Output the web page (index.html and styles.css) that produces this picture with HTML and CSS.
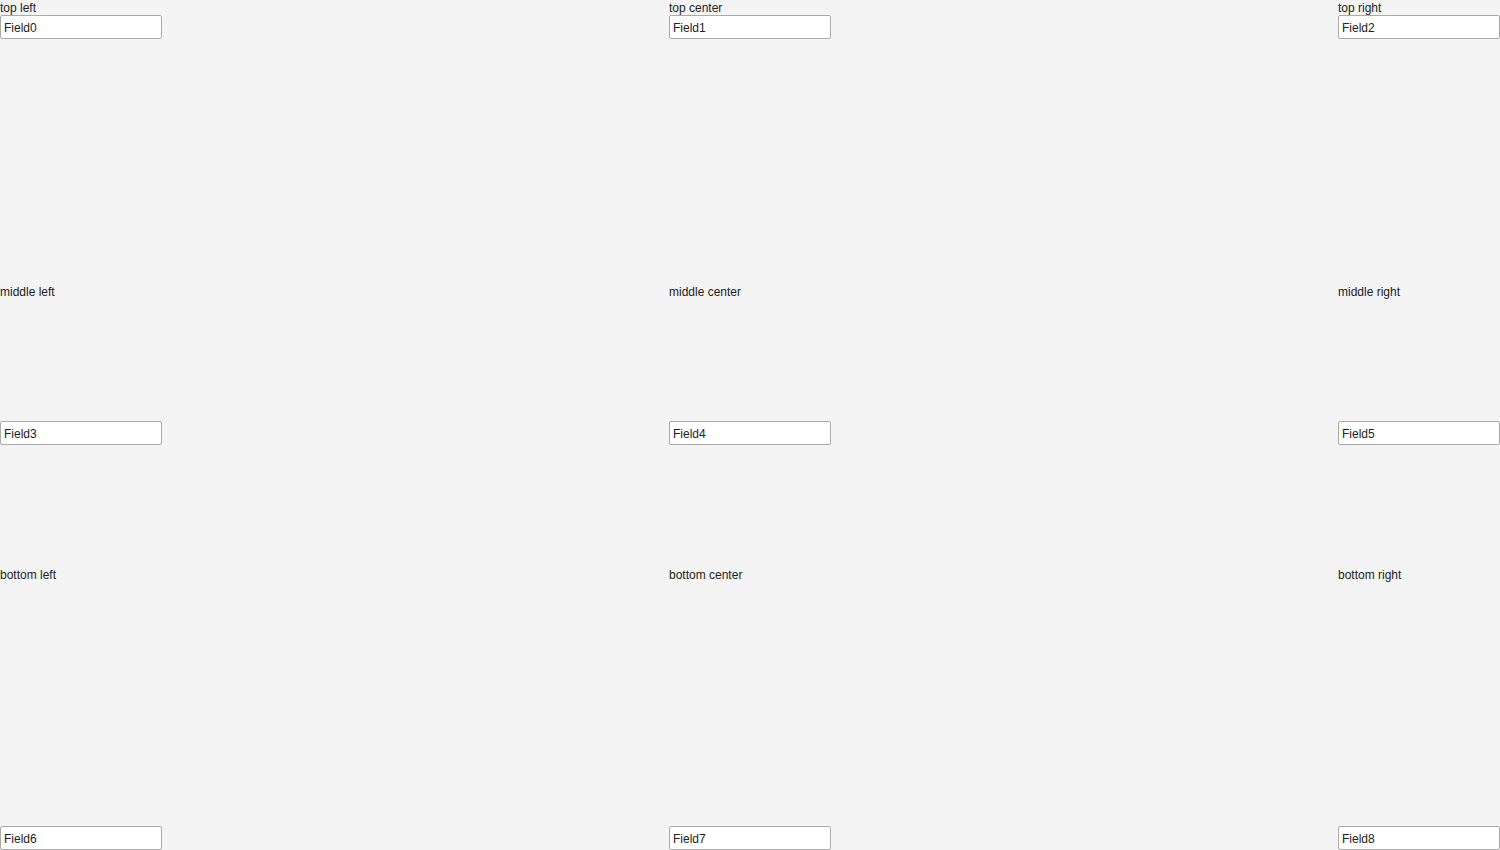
FILE: index.html
```html
<!DOCTYPE html>
<html>
<head>
<meta charset="utf-8">
<link rel="stylesheet" href="styles.css">
</head>
<body>
<div class="grid">
  <div class="cell top"><span class="label">top left</span><div class="area"><input class="field" value="Field0"></div></div>
  <div class="cell top"><span class="label">top center</span><div class="area"><input class="field" value="Field1"></div></div>
  <div class="cell top"><span class="label">top right</span><div class="area"><input class="field" value="Field2"></div></div>
  <div class="cell middle"><span class="label">middle left</span><div class="area"><input class="field" value="Field3"></div></div>
  <div class="cell middle"><span class="label">middle center</span><div class="area"><input class="field" value="Field4"></div></div>
  <div class="cell middle"><span class="label">middle right</span><div class="area"><input class="field" value="Field5"></div></div>
  <div class="cell bottom"><span class="label">bottom left</span><div class="area"><input class="field" value="Field6"></div></div>
  <div class="cell bottom"><span class="label">bottom center</span><div class="area"><input class="field" value="Field7"></div></div>
  <div class="cell bottom"><span class="label">bottom right</span><div class="area"><input class="field" value="Field8"></div></div>
</div>
</body>
</html>
```
FILE: styles.css
```css
html, body {
  margin: 0;
  padding: 0;
  background: #f4f4f4;
  font-family: "Liberation Sans", Arial, sans-serif;
  font-size: 12px;
  color: #222;
}
.grid {
  display: grid;
  grid-template-columns: 162px 162px 162px;
  grid-template-rows: 1fr 1fr 1fr;
  justify-content: space-between;
  width: 1500px;
  height: 850px;
}
.cell {
  display: flex;
  flex-direction: column;
  min-height: 0;
}
.label {
  display: block;
  line-height: 17px;
  height: 15px;
  white-space: nowrap;
}
.middle .label {
  padding-top: 1px;
}
.area {
  flex: 1;
  display: flex;
  flex-direction: column;
}
.top .area { justify-content: flex-start; }
.middle .area { justify-content: center; }
.bottom .area { justify-content: flex-end; }
.field {
  box-sizing: border-box;
  width: 162px;
  height: 24px;
  margin: 0;
  padding: 2px 3px 0;
  border: 1px solid #aaa;
  border-radius: 2px;
  background: #fff;
  font-family: "Liberation Sans", Arial, sans-serif;
  font-size: 12px;
  color: #222;
  outline: none;
}
```
